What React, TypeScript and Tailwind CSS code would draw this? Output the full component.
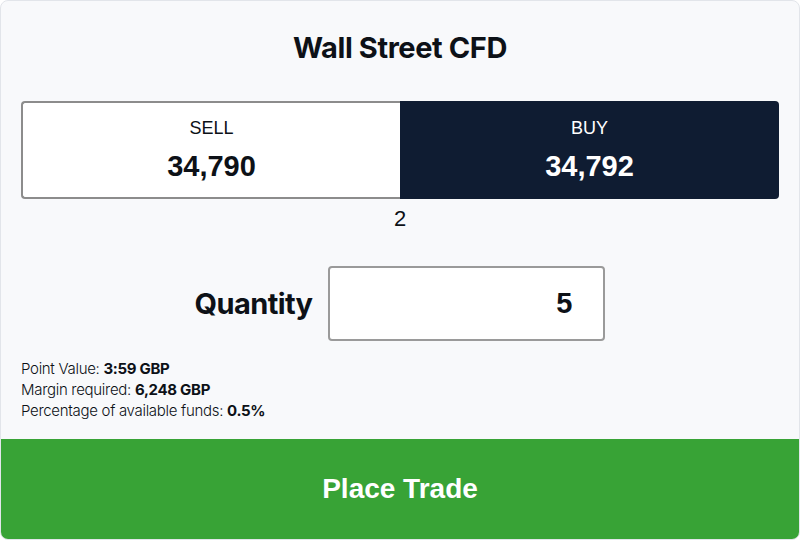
export default function App() {
  return (
    <div className="flex h-[540px] w-[800px] flex-col overflow-hidden rounded-lg border border-[#e2e5ea] bg-[#f8f9fb] font-['Inter',sans-serif] text-[#0d1117]">
      <h1 className="mt-[31px] text-center text-[29px] font-bold leading-[32px] tracking-[-0.4px]">
        Wall Street CFD
      </h1>

      <div className="mx-[20px] mt-[37px] grid h-[98px] grid-cols-2 font-['Liberation_Sans',Arial,sans-serif]">
        <button className="flex flex-col items-center justify-center rounded-l-[4px] border-2 border-r-0 border-[#8c8c8c] bg-white">
          <span className="text-[18px] font-medium leading-[22px]">SELL</span>
          <span className="mt-[10px] text-[29px] font-semibold leading-[34px]">34,790</span>
        </button>
        <button className="flex flex-col items-center justify-center rounded-r-[4px] bg-[#0f1c32] text-white">
          <span className="text-[18px] font-medium leading-[22px]">BUY</span>
          <span className="mt-[10px] text-[29px] font-semibold leading-[34px]">34,792</span>
        </button>
      </div>

      <div className="mt-[7px] text-center font-['Liberation_Sans',Arial,sans-serif] text-[22px] font-medium leading-[26px]">2</div>

      <div className="mt-[34px] flex items-center justify-center gap-[16px]">
        <span className="text-[29px] font-bold leading-[34px] tracking-[-0.6px]">Quantity</span>
        <div className="flex h-[75px] w-[277px] items-center justify-end rounded-[4px] border-2 border-[#9a9a9a] bg-white pr-[31px] font-['Liberation_Sans',Arial,sans-serif] text-[29px] font-semibold">
          5
        </div>
      </div>

      <div className="mt-[17px] pl-[20px] text-[15px] font-light leading-[21px] tracking-[-0.3px]">
        <p>
          Point Value: <span className="font-bold">3:59 GBP</span>
        </p>
        <p>
          Margin required: <span className="font-bold">6,248 GBP</span>
        </p>
        <p>
          Percentage of available funds: <span className="font-bold">0.5%</span>
        </p>
      </div>

      <button className="mt-auto flex h-[100px] items-center justify-center bg-[#38a336] font-['Liberation_Sans',Arial,sans-serif] text-[28px] font-bold text-white">
        Place Trade
      </button>
    </div>
  );
}
